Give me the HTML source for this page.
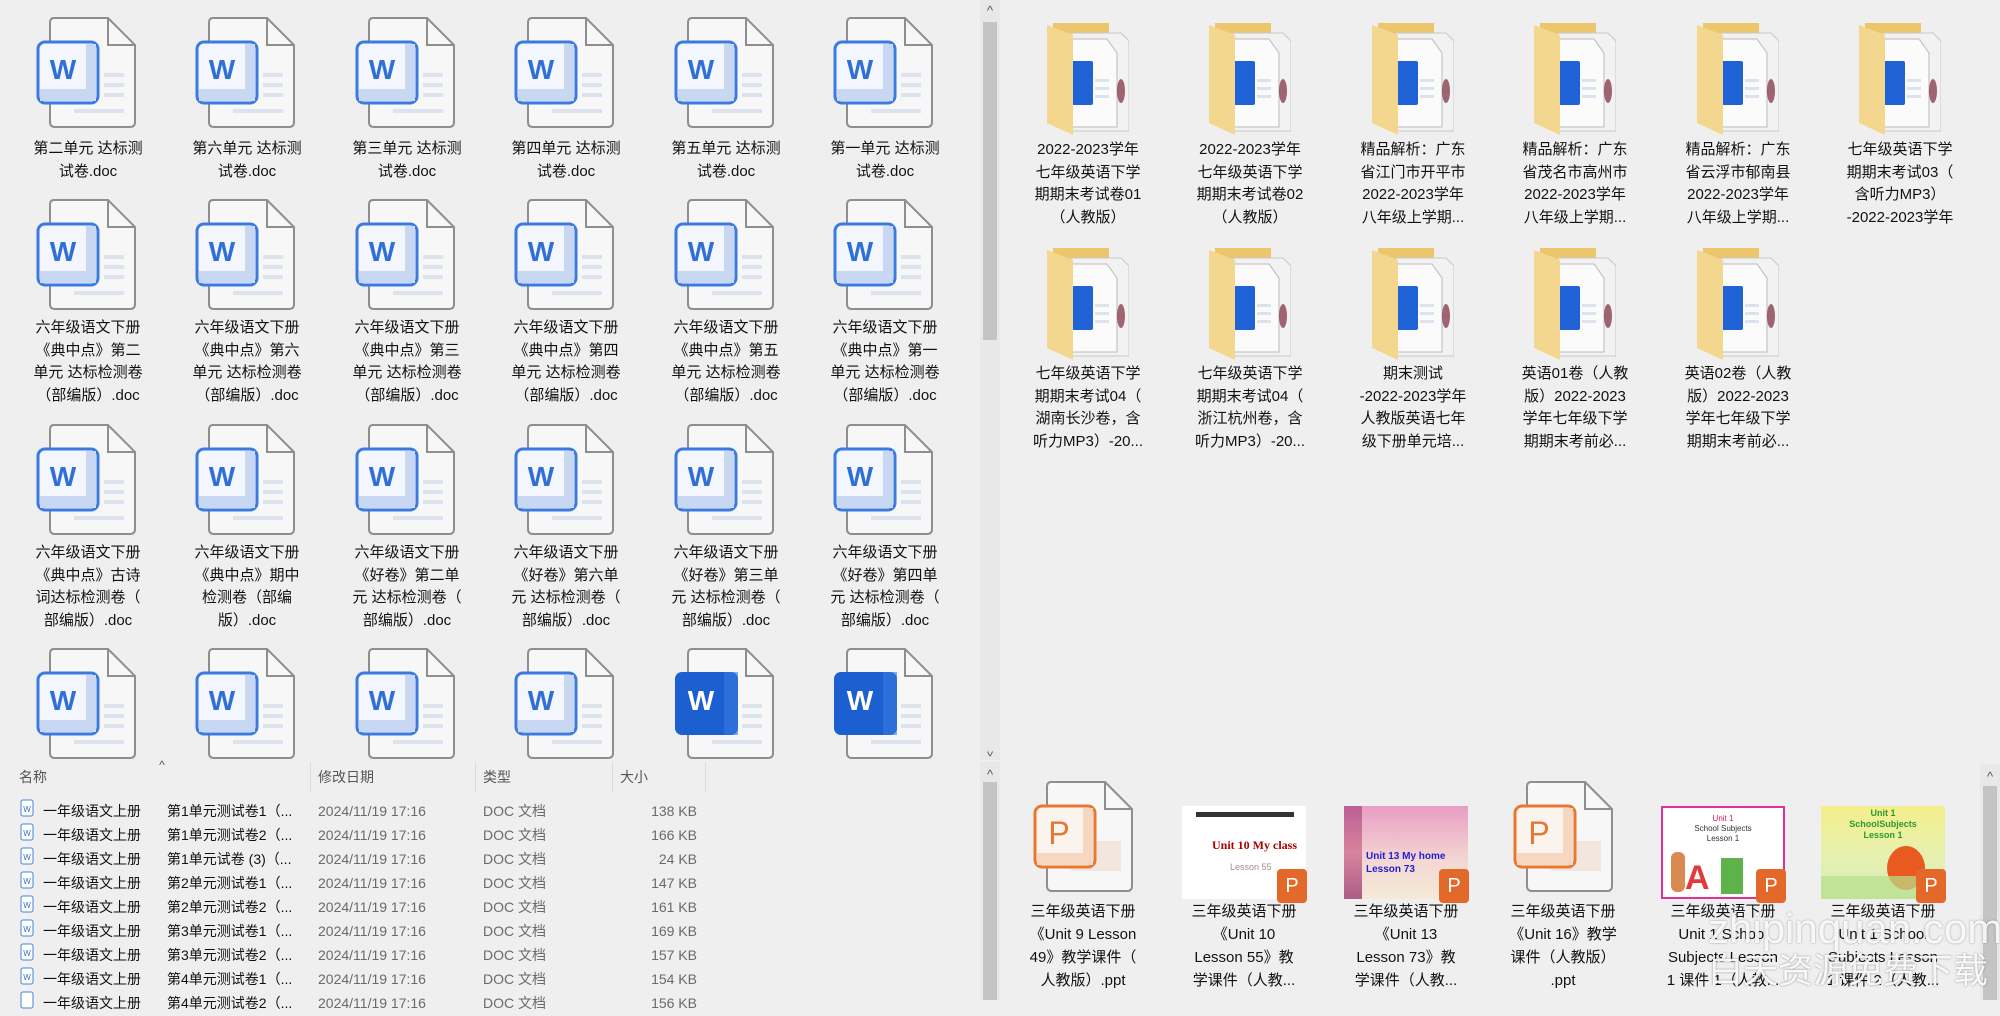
<!DOCTYPE html>
<html><head><meta charset="utf-8">
<style>
*{margin:0;padding:0;box-sizing:border-box}
body{width:2000px;height:1000px;background:#efefef;position:relative;overflow:hidden;font-family:"Liberation Sans","Noto Sans CJK SC",sans-serif;color:#111}
.ic{position:absolute}
.lb{position:absolute;width:160px;text-align:center;font-size:15px;line-height:22.5px;white-space:nowrap;color:#111}
.row{position:absolute;left:0;height:24px;font-size:14px;line-height:24px;width:760px}
.row span{position:absolute;white-space:nowrap}
.g{color:#6a6a6a}
.hd{position:absolute;top:766px;font-size:14px;color:#555;line-height:22px}
.sep{position:absolute;top:762px;width:1px;height:30px;background:#dcdcdc}
.sb{position:absolute;background:#e8e8e8}
.th{position:absolute;background:#c4c4c4}
.ar{position:absolute;font-size:13px;color:#555;width:20px;text-align:center;line-height:14px}
.badge{position:absolute;width:30px;height:34px;background:#e3692a;border-radius:4px;color:#fff;font-size:20px;text-align:center;line-height:34px}
</style></head><body>
<svg width="0" height="0" style="position:absolute">
<defs>
<symbol id="doc" viewBox="0 0 100 112">
<path d="M18 1 H72 L99 28 V105 Q99 110 94 110 H19 Q14 110 14 105 V6 Q14 1 18 1 Z" fill="#f7f7f7" stroke="#8e8e8e" stroke-width="2"/>
<path d="M72 1 V28 H99" fill="none" stroke="#8e8e8e" stroke-width="2"/>
<rect x="68" y="56" width="20" height="4" fill="#dde3ee"/><rect x="68" y="66" width="20" height="4" fill="#dde3ee"/>
<rect x="68" y="76" width="20" height="4" fill="#dde3ee"/><rect x="38" y="92" width="50" height="4" fill="#dde3ee"/>
<rect x="2" y="25" width="60" height="61" rx="7" fill="#f3f6fc" stroke="#3b7be0" stroke-width="3"/>
<rect x="50" y="27" width="10" height="57" fill="#c8d7f2"/><rect x="4" y="72" width="56" height="12" fill="#c8d7f2"/>
<text x="27" y="62" font-family="Liberation Sans" font-weight="bold" font-size="28" fill="#2f6fd6" text-anchor="middle">W</text>
</symbol>
<symbol id="docb" viewBox="0 0 100 112">
<path d="M18 1 H72 L99 28 V105 Q99 110 94 110 H19 Q14 110 14 105 V6 Q14 1 18 1 Z" fill="#f7f7f7" stroke="#8e8e8e" stroke-width="2"/>
<path d="M72 1 V28 H99" fill="none" stroke="#8e8e8e" stroke-width="2"/>
<rect x="68" y="56" width="20" height="4" fill="#dde3ee"/><rect x="68" y="66" width="20" height="4" fill="#dde3ee"/>
<rect x="68" y="76" width="20" height="4" fill="#dde3ee"/><rect x="38" y="92" width="50" height="4" fill="#dde3ee"/>
<rect x="1" y="24" width="63" height="63" rx="7" fill="#1b5fd1"/>
<rect x="50" y="24" width="14" height="63" fill="#3a7ae0" opacity=".6"/>
<text x="27" y="62" font-family="Liberation Sans" font-weight="bold" font-size="28" fill="#fff" text-anchor="middle">W</text>
</symbol>
<symbol id="ppt" viewBox="0 0 100 112">
<path d="M18 1 H72 L99 28 V105 Q99 110 94 110 H19 Q14 110 14 105 V6 Q14 1 18 1 Z" fill="#f7f7f7" stroke="#8e8e8e" stroke-width="2"/>
<path d="M72 1 V28 H99" fill="none" stroke="#8e8e8e" stroke-width="2"/>
<rect x="38" y="60" width="50" height="30" fill="#f3e6de"/>
<rect x="2" y="25" width="60" height="61" rx="7" fill="#fbf3ee" stroke="#e7782f" stroke-width="3"/>
<rect x="50" y="27" width="10" height="57" fill="#f6d7c2"/><rect x="4" y="72" width="56" height="12" fill="#f6d7c2"/>
<text x="26" y="63" font-family="Liberation Sans" font-size="32" fill="#e7782f" text-anchor="middle">P</text>
</symbol>
<symbol id="fold" viewBox="0 0 82 112">
<path d="M6 0 H62 V100 H6 Z" fill="#ecc66c"/>
<path d="M24 10 H74 L82 18 V108 H24 Z" fill="#f2f2f2" stroke="#c8c8c8"/>
<path d="M18 16 H60 L70 30 V104 H18 Z" fill="#fbfbfb" stroke="#b9b9b9"/>
<ellipse cx="74" cy="68" rx="4" ry="12" fill="#7a2a3a" opacity=".7"/>
<rect x="24" y="38" width="22" height="44" rx="2" fill="#1f63d6"/>
<rect x="48" y="56" width="14" height="3" fill="#dde3ee"/><rect x="48" y="64" width="14" height="3" fill="#dde3ee"/><rect x="48" y="72" width="14" height="3" fill="#dde3ee"/>
<path d="M0 2 L26 12 V112 L0 100 Z" fill="#f4d78e"/>
</symbol>
</defs></svg>

<!-- LEFT GRID -->
<svg class="ic" style="left:36px;top:17px" width="100" height="112"><use href="#doc"/></svg>
<svg class="ic" style="left:195px;top:17px" width="100" height="112"><use href="#doc"/></svg>
<svg class="ic" style="left:355px;top:17px" width="100" height="112"><use href="#doc"/></svg>
<svg class="ic" style="left:514px;top:17px" width="100" height="112"><use href="#doc"/></svg>
<svg class="ic" style="left:674px;top:17px" width="100" height="112"><use href="#doc"/></svg>
<svg class="ic" style="left:833px;top:17px" width="100" height="112"><use href="#doc"/></svg>
<div class="lb" style="left:8px;top:138px">第二单元 达标测<br>试卷.doc</div>
<div class="lb" style="left:167px;top:138px">第六单元 达标测<br>试卷.doc</div>
<div class="lb" style="left:327px;top:138px">第三单元 达标测<br>试卷.doc</div>
<div class="lb" style="left:486px;top:138px">第四单元 达标测<br>试卷.doc</div>
<div class="lb" style="left:646px;top:138px">第五单元 达标测<br>试卷.doc</div>
<div class="lb" style="left:805px;top:138px">第一单元 达标测<br>试卷.doc</div>

<svg class="ic" style="left:36px;top:199px" width="100" height="112"><use href="#doc"/></svg>
<svg class="ic" style="left:195px;top:199px" width="100" height="112"><use href="#doc"/></svg>
<svg class="ic" style="left:355px;top:199px" width="100" height="112"><use href="#doc"/></svg>
<svg class="ic" style="left:514px;top:199px" width="100" height="112"><use href="#doc"/></svg>
<svg class="ic" style="left:674px;top:199px" width="100" height="112"><use href="#doc"/></svg>
<svg class="ic" style="left:833px;top:199px" width="100" height="112"><use href="#doc"/></svg>
<div class="lb" style="left:8px;top:317px">六年级语文下册<br>《典中点》第二<br>单元 达标检测卷<br>（部编版）.doc</div>
<div class="lb" style="left:167px;top:317px">六年级语文下册<br>《典中点》第六<br>单元 达标检测卷<br>（部编版）.doc</div>
<div class="lb" style="left:327px;top:317px">六年级语文下册<br>《典中点》第三<br>单元 达标检测卷<br>（部编版）.doc</div>
<div class="lb" style="left:486px;top:317px">六年级语文下册<br>《典中点》第四<br>单元 达标检测卷<br>（部编版）.doc</div>
<div class="lb" style="left:646px;top:317px">六年级语文下册<br>《典中点》第五<br>单元 达标检测卷<br>（部编版）.doc</div>
<div class="lb" style="left:805px;top:317px">六年级语文下册<br>《典中点》第一<br>单元 达标检测卷<br>（部编版）.doc</div>

<svg class="ic" style="left:36px;top:424px" width="100" height="112"><use href="#doc"/></svg>
<svg class="ic" style="left:195px;top:424px" width="100" height="112"><use href="#doc"/></svg>
<svg class="ic" style="left:355px;top:424px" width="100" height="112"><use href="#doc"/></svg>
<svg class="ic" style="left:514px;top:424px" width="100" height="112"><use href="#doc"/></svg>
<svg class="ic" style="left:674px;top:424px" width="100" height="112"><use href="#doc"/></svg>
<svg class="ic" style="left:833px;top:424px" width="100" height="112"><use href="#doc"/></svg>
<div class="lb" style="left:8px;top:542px">六年级语文下册<br>《典中点》古诗<br>词达标检测卷（<br>部编版）.doc</div>
<div class="lb" style="left:167px;top:542px">六年级语文下册<br>《典中点》期中<br>检测卷（部编<br>版）.doc</div>
<div class="lb" style="left:327px;top:542px">六年级语文下册<br>《好卷》第二单<br>元 达标检测卷（<br>部编版）.doc</div>
<div class="lb" style="left:486px;top:542px">六年级语文下册<br>《好卷》第六单<br>元 达标检测卷（<br>部编版）.doc</div>
<div class="lb" style="left:646px;top:542px">六年级语文下册<br>《好卷》第三单<br>元 达标检测卷（<br>部编版）.doc</div>
<div class="lb" style="left:805px;top:542px">六年级语文下册<br>《好卷》第四单<br>元 达标检测卷（<br>部编版）.doc</div>

<div style="position:absolute;left:0;top:640px;width:978px;height:120px;overflow:hidden">
<svg class="ic" style="left:36px;top:8px" width="100" height="112"><use href="#doc"/></svg>
<svg class="ic" style="left:195px;top:8px" width="100" height="112"><use href="#doc"/></svg>
<svg class="ic" style="left:355px;top:8px" width="100" height="112"><use href="#doc"/></svg>
<svg class="ic" style="left:514px;top:8px" width="100" height="112"><use href="#doc"/></svg>
<svg class="ic" style="left:674px;top:8px" width="100" height="112"><use href="#docb"/></svg>
<svg class="ic" style="left:833px;top:8px" width="100" height="112"><use href="#docb"/></svg>
</div>

<!-- LIST -->
<div style="position:absolute;left:0;top:760px;width:980px;height:240px;background:#efefef"></div>
<div class="ar" style="left:152px;top:758px;font-size:12px">^</div>
<div class="hd" style="left:19px">名称</div>
<div class="sep" style="left:310px"></div>
<div class="hd" style="left:318px">修改日期</div>
<div class="sep" style="left:475px"></div>
<div class="hd" style="left:483px">类型</div>
<div class="sep" style="left:612px"></div>
<div class="hd" style="left:620px">大小</div>
<div class="sep" style="left:705px"></div>

<div class="row" style="top:799px"><span style="left:20px"><svg width="14" height="18"><rect x="1" y="1" width="12" height="16" rx="2" fill="#fff" stroke="#4a80d8"/><text x="7" y="13" font-size="8" fill="#2f6fd6" text-anchor="middle" font-family="Liberation Sans">W</text></svg></span><span style="left:43px">一年级语文上册</span><span style="left:167px">第1单元测试卷1（...</span><span class="g" style="left:318px">2024/11/19 17:16</span><span class="g" style="left:483px">DOC 文档</span><span class="g" style="right:63px">138 KB</span></div>
<div class="row" style="top:823px"><span style="left:20px"><svg width="14" height="18"><rect x="1" y="1" width="12" height="16" rx="2" fill="#fff" stroke="#4a80d8"/><text x="7" y="13" font-size="8" fill="#2f6fd6" text-anchor="middle" font-family="Liberation Sans">W</text></svg></span><span style="left:43px">一年级语文上册</span><span style="left:167px">第1单元测试卷2（...</span><span class="g" style="left:318px">2024/11/19 17:16</span><span class="g" style="left:483px">DOC 文档</span><span class="g" style="right:63px">166 KB</span></div>
<div class="row" style="top:847px"><span style="left:20px"><svg width="14" height="18"><rect x="1" y="1" width="12" height="16" rx="2" fill="#fff" stroke="#4a80d8"/><text x="7" y="13" font-size="8" fill="#2f6fd6" text-anchor="middle" font-family="Liberation Sans">W</text></svg></span><span style="left:43px">一年级语文上册</span><span style="left:167px">第1单元试卷 (3)（...</span><span class="g" style="left:318px">2024/11/19 17:16</span><span class="g" style="left:483px">DOC 文档</span><span class="g" style="right:63px">24 KB</span></div>
<div class="row" style="top:871px"><span style="left:20px"><svg width="14" height="18"><rect x="1" y="1" width="12" height="16" rx="2" fill="#fff" stroke="#4a80d8"/><text x="7" y="13" font-size="8" fill="#2f6fd6" text-anchor="middle" font-family="Liberation Sans">W</text></svg></span><span style="left:43px">一年级语文上册</span><span style="left:167px">第2单元测试卷1（...</span><span class="g" style="left:318px">2024/11/19 17:16</span><span class="g" style="left:483px">DOC 文档</span><span class="g" style="right:63px">147 KB</span></div>
<div class="row" style="top:895px"><span style="left:20px"><svg width="14" height="18"><rect x="1" y="1" width="12" height="16" rx="2" fill="#fff" stroke="#4a80d8"/><text x="7" y="13" font-size="8" fill="#2f6fd6" text-anchor="middle" font-family="Liberation Sans">W</text></svg></span><span style="left:43px">一年级语文上册</span><span style="left:167px">第2单元测试卷2（...</span><span class="g" style="left:318px">2024/11/19 17:16</span><span class="g" style="left:483px">DOC 文档</span><span class="g" style="right:63px">161 KB</span></div>
<div class="row" style="top:919px"><span style="left:20px"><svg width="14" height="18"><rect x="1" y="1" width="12" height="16" rx="2" fill="#fff" stroke="#4a80d8"/><text x="7" y="13" font-size="8" fill="#2f6fd6" text-anchor="middle" font-family="Liberation Sans">W</text></svg></span><span style="left:43px">一年级语文上册</span><span style="left:167px">第3单元测试卷1（...</span><span class="g" style="left:318px">2024/11/19 17:16</span><span class="g" style="left:483px">DOC 文档</span><span class="g" style="right:63px">169 KB</span></div>
<div class="row" style="top:943px"><span style="left:20px"><svg width="14" height="18"><rect x="1" y="1" width="12" height="16" rx="2" fill="#fff" stroke="#4a80d8"/><text x="7" y="13" font-size="8" fill="#2f6fd6" text-anchor="middle" font-family="Liberation Sans">W</text></svg></span><span style="left:43px">一年级语文上册</span><span style="left:167px">第3单元测试卷2（...</span><span class="g" style="left:318px">2024/11/19 17:16</span><span class="g" style="left:483px">DOC 文档</span><span class="g" style="right:63px">157 KB</span></div>
<div class="row" style="top:967px"><span style="left:20px"><svg width="14" height="18"><rect x="1" y="1" width="12" height="16" rx="2" fill="#fff" stroke="#4a80d8"/><text x="7" y="13" font-size="8" fill="#2f6fd6" text-anchor="middle" font-family="Liberation Sans">W</text></svg></span><span style="left:43px">一年级语文上册</span><span style="left:167px">第4单元测试卷1（...</span><span class="g" style="left:318px">2024/11/19 17:16</span><span class="g" style="left:483px">DOC 文档</span><span class="g" style="right:63px">154 KB</span></div>
<div class="row" style="top:991px"><span style="left:20px"><svg width="14" height="18"><rect x="1" y="1" width="12" height="16" rx="2" fill="#fff" stroke="#4a80d8"/></svg></span><span style="left:43px">一年级语文上册</span><span style="left:167px">第4单元测试卷2（...</span><span class="g" style="left:318px">2024/11/19 17:16</span><span class="g" style="left:483px">DOC 文档</span><span class="g" style="right:63px">156 KB</span></div>

<!-- SCROLLBARS -->
<div class="sb" style="left:980px;top:0;width:20px;height:760px"></div>
<div class="th" style="left:983px;top:22px;width:14px;height:318px"></div>
<div class="ar" style="left:980px;top:4px">^</div>
<div class="ar" style="left:980px;top:744px;transform:rotate(180deg)">^</div>
<div class="sb" style="left:980px;top:762px;width:20px;height:238px"></div>
<div class="th" style="left:983px;top:782px;width:14px;height:218px"></div>
<div class="ar" style="left:980px;top:768px">^</div>
<div class="sb" style="left:1980px;top:764px;width:20px;height:236px"></div>
<div class="th" style="left:1983px;top:786px;width:14px;height:214px"></div>
<div class="ar" style="left:1980px;top:770px">^</div>

<!-- RIGHT FOLDERS -->
<svg class="ic" style="left:1047px;top:23px" width="82" height="112"><use href="#fold"/></svg>
<svg class="ic" style="left:1209px;top:23px" width="82" height="112"><use href="#fold"/></svg>
<svg class="ic" style="left:1372px;top:23px" width="82" height="112"><use href="#fold"/></svg>
<svg class="ic" style="left:1534px;top:23px" width="82" height="112"><use href="#fold"/></svg>
<svg class="ic" style="left:1697px;top:23px" width="82" height="112"><use href="#fold"/></svg>
<svg class="ic" style="left:1859px;top:23px" width="82" height="112"><use href="#fold"/></svg>
<div class="lb" style="left:1008px;top:139px">2022-2023学年<br>七年级英语下学<br>期期末考试卷01<br>（人教版）</div>
<div class="lb" style="left:1170px;top:139px">2022-2023学年<br>七年级英语下学<br>期期末考试卷02<br>（人教版）</div>
<div class="lb" style="left:1333px;top:139px">精品解析：广东<br>省江门市开平市<br>2022-2023学年<br>八年级上学期...</div>
<div class="lb" style="left:1495px;top:139px">精品解析：广东<br>省茂名市高州市<br>2022-2023学年<br>八年级上学期...</div>
<div class="lb" style="left:1658px;top:139px">精品解析：广东<br>省云浮市郁南县<br>2022-2023学年<br>八年级上学期...</div>
<div class="lb" style="left:1820px;top:139px">七年级英语下学<br>期期末考试03（<br>含听力MP3）<br>-2022-2023学年</div>

<svg class="ic" style="left:1047px;top:248px" width="82" height="112"><use href="#fold"/></svg>
<svg class="ic" style="left:1209px;top:248px" width="82" height="112"><use href="#fold"/></svg>
<svg class="ic" style="left:1372px;top:248px" width="82" height="112"><use href="#fold"/></svg>
<svg class="ic" style="left:1534px;top:248px" width="82" height="112"><use href="#fold"/></svg>
<svg class="ic" style="left:1697px;top:248px" width="82" height="112"><use href="#fold"/></svg>
<div class="lb" style="left:1008px;top:363px">七年级英语下学<br>期期末考试04（<br>湖南长沙卷，含<br>听力MP3）-20...</div>
<div class="lb" style="left:1170px;top:363px">七年级英语下学<br>期期末考试04（<br>浙江杭州卷，含<br>听力MP3）-20...</div>
<div class="lb" style="left:1333px;top:363px">期末测试<br>-2022-2023学年<br>人教版英语七年<br>级下册单元培...</div>
<div class="lb" style="left:1495px;top:363px">英语01卷（人教<br>版）2022-2023<br>学年七年级下学<br>期期末考前必...</div>
<div class="lb" style="left:1658px;top:363px">英语02卷（人教<br>版）2022-2023<br>学年七年级下学<br>期期末考前必...</div>

<!-- RIGHT LOWER -->
<svg class="ic" style="left:1033px;top:781px" width="100" height="112"><use href="#ppt"/></svg>
<svg class="ic" style="left:1513px;top:781px" width="100" height="112"><use href="#ppt"/></svg>
<div style="position:absolute;left:1182px;top:806px;width:124px;height:93px;background:#fff">
 <div style="position:absolute;left:14px;top:6px;width:98px;height:5px;background:#333"></div>
 <div style="position:absolute;left:30px;top:32px;font-size:12px;font-weight:bold;color:#a00;font-family:'Liberation Serif'">Unit 10 My class</div>
 <div style="position:absolute;left:48px;top:56px;font-size:9px;color:#a88">Lesson 55</div>
</div>
<div style="position:absolute;left:1344px;top:806px;width:124px;height:93px;background:linear-gradient(#e99dc4,#f3d8d3 60%,#f5ead8)">
 <div style="position:absolute;left:0;top:0;width:18px;height:93px;background:linear-gradient(#b0508a,#d07090,#9a3a70);opacity:.8"></div>
 <div style="position:absolute;left:22px;top:44px;font-size:10px;font-weight:bold;color:#2020d0;line-height:13px">Unit 13 My home<br>Lesson 73</div>
</div>
<div style="position:absolute;left:1661px;top:806px;width:124px;height:93px;background:#fff;border:2px solid #e0309a">
 <div style="position:absolute;left:0;width:120px;top:6px;text-align:center;font-size:8px;color:#333;line-height:10px"><span style="color:#d02050">Unit 1</span><br>School Subjects<br>Lesson 1</div>
 <div style="position:absolute;left:22px;top:52px;font-size:34px;font-weight:bold;color:#e23a3a;line-height:36px">A</div>
 <div style="position:absolute;left:58px;top:50px;width:22px;height:36px;background:#5db34a"></div>
 <div style="position:absolute;left:8px;top:44px;width:14px;height:40px;background:#d88a50;border-radius:6px"></div>
</div>
<div style="position:absolute;left:1821px;top:806px;width:124px;height:93px;background:linear-gradient(#f4ee8c,#e6f1b0 55%,#d2ecb9)">
 <div style="position:absolute;left:0;width:124px;top:2px;text-align:center;font-size:9px;font-weight:bold;color:#2a9a30;line-height:11px">Unit 1<br>SchoolSubjects<br>Lesson 1</div>
 <div style="position:absolute;left:66px;top:40px;width:38px;height:44px;background:#e85a20;border-radius:50%"></div>
 <div style="position:absolute;left:0;top:70px;width:124px;height:23px;background:#b9df8a;opacity:.7"></div>
</div>
<div class="badge" style="left:1277px;top:869px">P</div>
<div class="badge" style="left:1439px;top:869px">P</div>
<div class="badge" style="left:1756px;top:869px">P</div>
<div class="badge" style="left:1916px;top:869px">P</div>

<div class="lb" style="left:1003px;top:900px;line-height:23px">三年级英语下册<br>《Unit 9 Lesson<br>49》教学课件（<br>人教版）.ppt</div>
<div class="lb" style="left:1164px;top:900px;line-height:23px">三年级英语下册<br>《Unit 10<br>Lesson 55》教<br>学课件（人教...</div>
<div class="lb" style="left:1326px;top:900px;line-height:23px">三年级英语下册<br>《Unit 13<br>Lesson 73》教<br>学课件（人教...</div>
<div class="lb" style="left:1483px;top:900px;line-height:23px">三年级英语下册<br>《Unit 16》教学<br>课件（人教版）<br>.ppt</div>
<div class="lb" style="left:1643px;top:900px;line-height:23px">三年级英语下册<br>Unit 1 School<br>Subjects Lesson<br>1 课件 1（人教...</div>
<div class="lb" style="left:1803px;top:900px;line-height:23px">三年级英语下册<br>Unit 1 School<br>Subjects Lesson<br>1 课件 2（人教...</div>

<!-- WATERMARK -->
<div style="position:absolute;left:1708px;top:906px;font-size:42px;line-height:46px;color:rgba(255,255,255,.9);text-shadow:0 0 2px rgba(0,0,0,.35);white-space:nowrap">zhipinquan.com</div>
<div style="position:absolute;left:1708px;top:950px;font-size:35px;line-height:44px;color:rgba(255,255,255,.92);text-shadow:0 0 2px rgba(0,0,0,.4);white-space:nowrap">白天资源免费下载</div>
</body></html>
